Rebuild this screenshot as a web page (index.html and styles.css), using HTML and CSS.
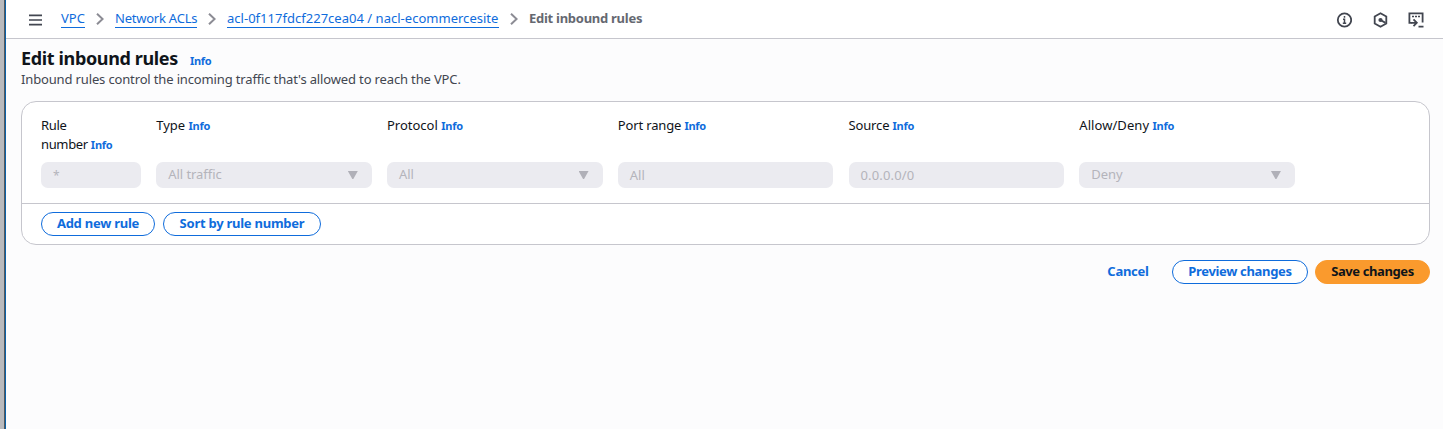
FILE: index.html
```html
<!DOCTYPE html>
<html lang="en">
<head>
<meta charset="utf-8">
<title>Edit inbound rules</title>
<link rel="stylesheet" href="styles.css">
</head>
<body>
<div class="window-edge"></div>
<div class="app">
  <header class="topbar">
    <svg class="menu-icon" viewBox="0 0 13 12"><path d="M0 1.400h13M0 6h13M0 10.600h13"/></svg>
    <nav class="crumbs">
      <a class="crumb crumb-vpc">VPC</a>
      <svg class="chevron" viewBox="0 0 8 12"><path d="M1 .8l5.600 5.200L1 11.200"/></svg>
      <a class="crumb crumb-acls">Network ACLs</a>
      <svg class="chevron" viewBox="0 0 8 12"><path d="M1 .8l5.600 5.200L1 11.200"/></svg>
      <a class="crumb crumb-acl">acl-0f117fdcf227cea04 / nacl-ecommercesite</a>
      <svg class="chevron" viewBox="0 0 8 12"><path d="M1 .8l5.600 5.200L1 11.200"/></svg>
      <span class="crumb-current">Edit inbound rules</span>
    </nav>
    <div class="tools">
      <svg class="tool" viewBox="0 0 16 16"><circle cx="8.500" cy="8" r="6.700"/><path class="thin" d="M8.500 4v1.800M7 7.300h1.500v4M6.800 11.300h3.400"/></svg>
      <svg class="tool" viewBox="0 0 16 16"><path d="M8.500 1.200l5.800 3.300v7l-5.800 3.300-5.800-3.300v-7z"/><circle class="solid" cx="8.500" cy="8" r="2.100"/><path d="M8.500 8l5 2.900"/></svg>
      <svg class="tool" viewBox="0 0 16 16"><path d="M4 10.800H1.400V1.400h13.200v9"/><path class="dots" d="M4 4.400h8"/><path d="M3.500 10.800h5M5.500 7.400l3.300 3.400-3.300 3.400M10.500 14.600H15.500"/></svg>
    </div>
  </header>
  <main class="page">
    <div class="heading"><h1>Edit inbound rules</h1><a class="info">Info</a></div>
    <p class="description">Inbound rules control the incoming traffic that's allowed to reach the VPC.</p>
    <section class="card">
      <div class="fields">
        <div class="field"><label class="label tighter">Rule<br>number <a class="info">Info</a></label><div class="input star">*</div></div>
        <div class="field"><label class="label">Type <a class="info">Info</a></label><div class="input select">All traffic<i class="caret"></i></div></div>
        <div class="field"><label class="label">Protocol <a class="info">Info</a></label><div class="input select">All<i class="caret"></i></div></div>
        <div class="field"><label class="label tight">Port range <a class="info">Info</a></label><div class="input">All</div></div>
        <div class="field"><label class="label tight">Source <a class="info">Info</a></label><div class="input address">0.0.0.0/0</div></div>
        <div class="field"><label class="label loose">Allow/Deny <a class="info">Info</a></label><div class="input select">Deny<i class="caret"></i></div></div>
      </div>
      <div class="card-actions">
        <button class="btn btn-add">Add new rule</button>
        <button class="btn btn-sort">Sort by rule number</button>
      </div>
    </section>
    <div class="page-actions">
      <button class="btn btn-link">Cancel</button>
      <button class="btn btn-preview">Preview changes</button>
      <button class="btn btn-primary">Save changes</button>
    </div>
  </main>
</div>
</body>
</html>
```
FILE: styles.css
```css
* { box-sizing: border-box; }
body {
  margin: 0;
  height: 429px;
  display: flex;
  overflow: hidden;
  background: #fcfcfd;
  font: 13px/19px "Noto Sans", "Open Sans", sans-serif;
  color: #0f141a;
}
.window-edge {
  width: 6px;
  flex: none;
  background: linear-gradient(90deg, #b9babd 0 4px, #55585c 4px 5px, #0b62a8 5px 6px);
}
.app { flex: 1; min-width: 0; }
.topbar {
  height: 39px;
  display: flex;
  align-items: center;
  padding: 1px 19px 0 23px;
  background: #fff;
  border-bottom: 1px solid #c6c6cd;
}
svg { fill: none; flex: none; }
.menu-icon { width: 13px; height: 12px; stroke: #424650; stroke-width: 1.700; }
.crumbs { display: flex; align-items: center; margin-left: 19px; padding-bottom: 1px; }
.crumb {
  height: 18px;
  color: #0f6cdc;
  line-height: 17px;
  border-bottom: 1px solid #0f6cdc;
  white-space: nowrap;
}
.crumb-vpc { width: 24px; }
.crumb-acls { width: 82px; letter-spacing: -0.23px; }
.crumb-acl { width: 272px; letter-spacing: 0.02px; }
.crumb-current { color: #656871; font-weight: 700; line-height: 18px; letter-spacing: -0.27px; margin-top: -2px; white-space: nowrap; }
.chevron { width: 8px; height: 12px; margin: 0 11px; stroke: #8c8c94; stroke-width: 2; }
.tools { display: flex; gap: 20px; margin-left: auto; }
.tool { width: 16px; height: 16px; stroke: #424650; stroke-width: 1.8; }
.thin { stroke-width: 1.500; }
.dots { stroke-width: 1.500; stroke-dasharray: 2 1; }
.solid { fill: #424650; stroke: none; }
.page { padding: 9px 13px 0 15px; }
.heading { display: flex; align-items: baseline; height: 22px; line-height: 21px; }
h1 { margin: 0 12px 0 0; font-size: 18px; line-height: 21px; letter-spacing: -0.36px; white-space: nowrap; }
.info { color: #0f6cdc; font-size: 11px; font-weight: 700; letter-spacing: -0.25px; }
.description { margin: 0; line-height: 19px; color: #424650; letter-spacing: -0.145px; white-space: nowrap; }
.card {
  margin-top: 12px;
  height: 144px;
  border: 1px solid #c6c6cd;
  border-radius: 15px;
  background: #fff;
}
.fields {
  height: 101px;
  padding: 14px 0 0 19px;
  display: grid;
  grid-template-columns: 100px repeat(5, 215.6px);
  column-gap: 15.2px;
}
.field { display: flex; flex-direction: column; height: 72px; justify-content: space-between; }
.label { white-space: nowrap; }
.tight { letter-spacing: -0.15px; }
.tighter { letter-spacing: -0.35px; }
.loose { letter-spacing: 0.06px; }
.input {
  height: 26px;
  line-height: 26px;
  padding: 0 12px;
  border-radius: 7px;
  background: #ebebf0;
  color: #b4b4bb;
}
.star { font-size: 12px; line-height: 28px; }
.address { letter-spacing: 0.15px; }
.select { display: flex; align-items: center; justify-content: space-between; line-height: 24px; padding-bottom: 2px; letter-spacing: -0.05px; }
.caret { width: 10px; height: 8px; margin: 2px 2px 0 0; background: #b0b0b8; clip-path: polygon(0 0, 100% 0, 55% 100%, 45% 100%); }
.card-actions {
  display: flex;
  gap: 8px;
  padding: 8px 0 0 19px;
  border-top: 1px solid #c6c6cd;
}
.btn {
  height: 24px;
  padding: 0 0 2px;
  border: 1px solid #0f6cdc;
  border-radius: 12px;
  background: #fff;
  color: #0f6cdc;
  font: 700 13px/20px "Noto Sans", "Open Sans", sans-serif;
  letter-spacing: -0.25px;
  white-space: nowrap;
}
.btn-add { width: 114px; }
.btn-sort { width: 158px; }
.page-actions { display: flex; justify-content: flex-end; margin-top: 15px; }
.btn-link { width: 74px; border-color: transparent; background: none; margin-right: 7px; }
.btn-preview { width: 136px; margin-right: 7px; letter-spacing: -0.33px; }
.btn-primary { width: 115px; background: #fa9a2d; border-color: #fa9a2d; color: #0f141a; letter-spacing: -0.4px; }
```
